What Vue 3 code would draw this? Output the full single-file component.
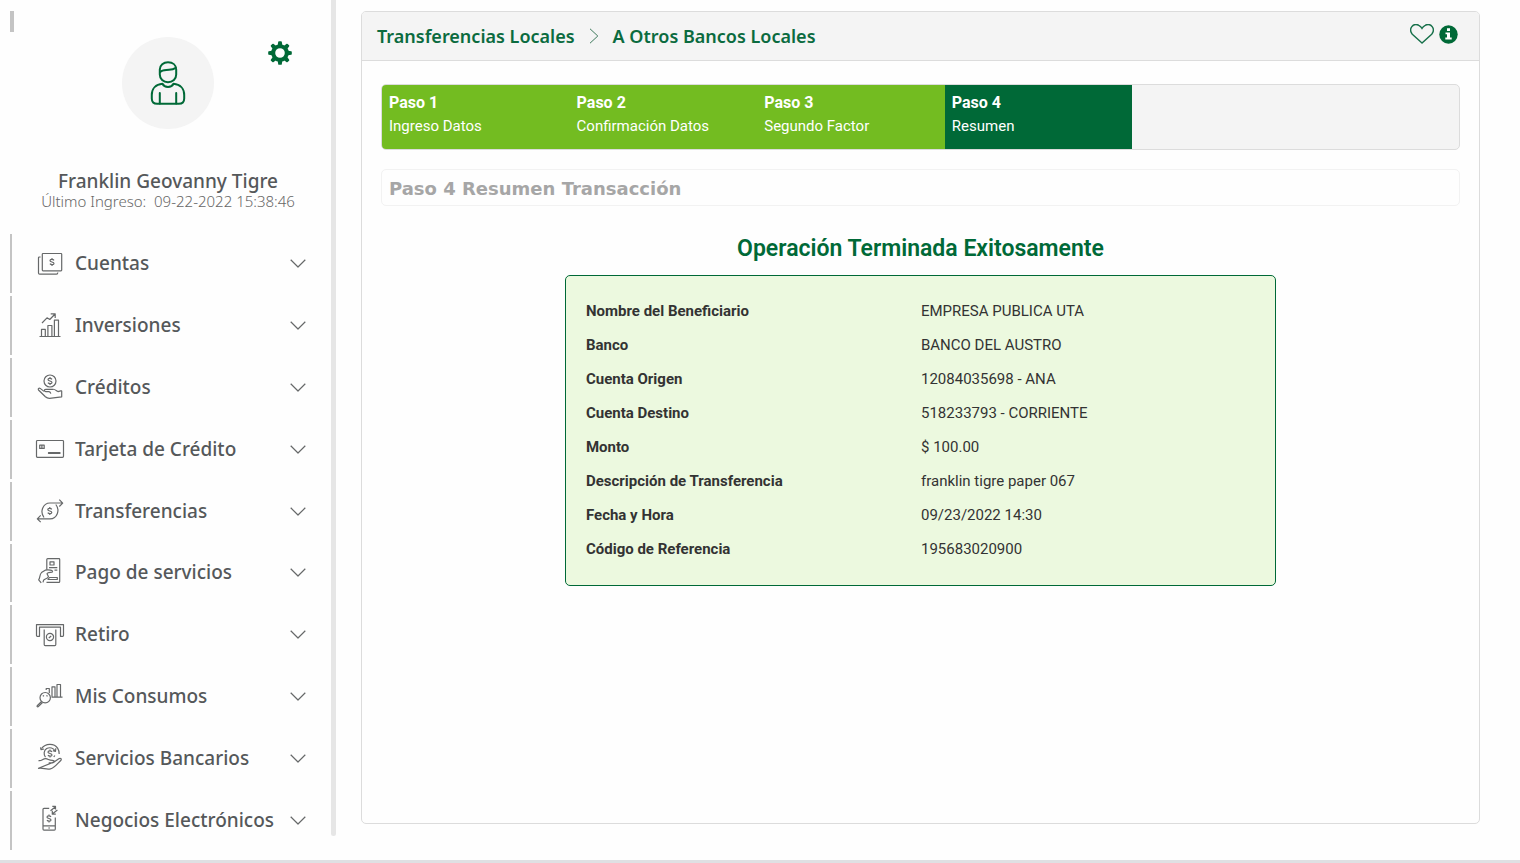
<script setup>
const menu = [
  { id: 'cuentas', label: 'Cuentas' },
  { id: 'inversiones', label: 'Inversiones' },
  { id: 'creditos', label: 'Créditos' },
  { id: 'tarjeta', label: 'Tarjeta de Crédito' },
  { id: 'transferencias', label: 'Transferencias' },
  { id: 'pago', label: 'Pago de servicios' },
  { id: 'retiro', label: 'Retiro' },
  { id: 'consumos', label: 'Mis Consumos' },
  { id: 'servicios', label: 'Servicios Bancarios' },
  { id: 'negocios', label: 'Negocios Electrónicos' },
]

// Stroke outlines on a 28 x 29 grid
const dollar = (x, y) =>
  `M${x + 2} ${y - 1.6}C${x + 1} ${y - 3} ${x - 2} ${y - 2.8} ${x - 2} ${y - 1.3}C${x - 2} ${y + 0.3} ${x + 2} ${y - 0.3} ${x + 2} ${y + 1.4}C${x + 2} ${y + 3} ${x - 1.2} ${y + 3} ${x - 2} ${y + 1.6}M${x} ${y - 4}V${y - 2.5}M${x} ${y + 2.6}V${y + 4}`

const icons = {
  cuentas: ['M7 4.5H25Q25.7 4.5 25.7 5.2V21Q25.7 21.8 25 21.8H7Q6.3 21.8 6.3 21V5.2Q6.3 4.5 7 4.5Z', 'M4.6 8H3.4Q2.5 8 2.5 9V24Q2.5 25.2 3.6 25.2H20.5Q21.8 25.2 21.8 23.5'],
  inversiones: ['M3.5 25.5H24.5M5.5 25.5V18.3H9.3V25.5M11.9 25.5V14.5H15.9V25.5M18.4 25.5V9.2H22.5V25.5', 'M6 12L11 6.8L13.8 8.5L19 3M14.7 2.8H19.2V7'],
  creditos: ['M20 8A6 6 0 1 1 8 8A6 6 0 1 1 20 8Z', 'M25.7 17.7L22 18.6C19.5 17 18.5 15.8 16.5 16.3H9.8C7.7 16.4 8.2 18.4 9.8 18.6H13C14.2 18.7 14.6 19.6 14.8 20.6', 'M8 18.4L4.2 15.4C3 14.6 1.7 15.7 2.5 17L9.4 23.7C10.6 24.8 11.8 25.4 13.6 25.3C18 24.8 21.2 24.4 25.7 23.8V17.7'],
  tarjeta: ['M1.5 5.5H26.5Q27.5 5.5 27.5 6.3V21.3Q27.5 22.3 26.5 22.3H1.5Q.5 22.3 .5 21.3V6.3Q.5 5.5 1.5 5.5Z', 'M3.7 10.2H8.2V13.4H3.7ZM5.9 10.2V13.4', 'M12.5 17.7H24V18.3H12.5Z'],
  transferencias: ['M8 20.5C3.7 15 6.7 6 14 6H26.5M23.3 2.7L26.7 6.1L23.3 9.5M19.8 7.5C24.2 13 21.3 21.8 14 21.8H1.5M4.7 18.4L1.3 21.8L4.7 25.2'],
  pago: ['M10.8 11.8V1.6Q10.8 .7 11.7 .7H23Q23.7 .7 23.7 1.5V23.5Q23.7 24.4 22.8 24.4H10.5', 'M14 3.8H18V7H14ZM13 9.6H21.3M18.5 12.2H21.3M13.5 19.5H21.3V21.5H12Z', 'M5.2 24.8L2.7 21.8C4.2 20.4 3.4 16.4 5.5 14.6L9.2 12.2C12.5 11.4 17.2 12.4 16.5 13.8C15.6 15 12 13.7 11 15.8L12.4 18.6C11.8 20.7 9 20.6 7.6 22.2L7 24.4'],
  retiro: ['M3.5 16.3H1.3Q.5 16.3 .5 15.5V4.6H27.5V15.5Q27.5 16.3 26.7 16.3H24.5V7.2H3.5Z', 'M8.2 9.6V24.5Q8.2 25.6 9.2 25.6H18.8Q19.8 25.6 19.8 24.5V9.6', 'M17.6 17A3.6 3.6 0 1 1 10.4 17A3.6 3.6 0 1 1 17.6 17Z', 'M15.2 16L12.8 18'],
  consumos: ['M14.4 15.7A5.2 5.2 0 1 1 4 15.7A5.2 5.2 0 1 1 14.4 15.7Z', 'M5.5 19.5L1.2 23.7Q.6 25.1 2.3 24.7L6.5 20.5', 'M10.2 8V6.5H13.3V11M16 14.5V4.8H19V14.5M21 14.5V2.5H24.5V14.5M15.5 15.2H26.5', 'M6.8 14.2L8 13.4M10.4 13.4L11.6 14.2'],
  servicios: ['M9.5 13.2C7.3 10.4 7.8 6.4 10.7 4.6C13.8 2.8 17.6 4 19.1 7M18.8 11.5L17.8 13', 'M5.5 4.7C9.6-.8 18-.9 21.6 4.1Q23.3 6.8 23.2 10', 'M4.5 3.4L5 5.6L8 5M19.8 4.2L19.5 7.3L16.9 6.6', 'M2.5 16.6C5.8 17.4 6.7 14.5 9.8 14.7C12.2 15 13.3 16.4 16.5 16.3C19 16.3 18.5 18.8 16.4 18.9H12.7M18.8 17.6L22.8 14.7C24.2 13.8 25.8 14.6 25 16.2C21.5 19.4 18.8 23.8 14.5 24.8C10 25.9 7.2 23.4 2.5 24.3Z'],
  negocios: ['M13.2 2.3H8Q7 2.3 7 3.2V23Q7 24.2 8 24.2H18.3Q19.3 24.2 19.3 23V11.5M7 19.8H19.3M12.3 22H14', 'M14.5 4.8L19.2 1M16.3 .4H19.5V3.6M21.4 4L16.6 7.8M16.3 4.8V8.2H19.8'],
}
icons.cuentas.push(dollar(16, 13))
icons.creditos.push(dollar(14, 8))
icons.transferencias.push(dollar(13.8, 14))
icons.servicios.push(dollar(14, 9.5))
icons.negocios.push(dollar(13, 12.5))

const steps = [
  { title: 'Paso 1', text: 'Ingreso Datos' },
  { title: 'Paso 2', text: 'Confirmación Datos' },
  { title: 'Paso 3', text: 'Segundo Factor' },
  { title: 'Paso 4', text: 'Resumen', current: true },
]

const details = [
  ['Nombre del Beneficiario', 'EMPRESA PUBLICA UTA'],
  ['Banco', 'BANCO DEL AUSTRO'],
  ['Cuenta Origen', '12084035698 - ANA'],
  ['Cuenta Destino', '518233793 - CORRIENTE'],
  ['Monto', '$ 100.00'],
  ['Descripción de Transferencia', 'franklin tigre paper 067'],
  ['Fecha y Hora', '09/23/2022 14:30'],
  ['Código de Referencia', '195683020900'],
]

const teeth = [0, 45, 90, 135, 180, 225, 270, 315]
</script>

<template>
  <div class="page">
    <div class="layout">
      <aside class="sidebar">
        <section class="profile">
          <div class="avatar">
            <svg width="36" height="44" viewBox="0 0 36 44" fill="none" stroke="#006937" stroke-width="2" stroke-linecap="round" stroke-linejoin="round">
              <path d="M9.8 8.5C9.8 4 13.5 1.2 18 1.2C22.7 1.2 26.2 4 26.2 8.5V13.5C26.2 18 22.8 21.3 18 21.3C13.3 21.3 9.8 18 9.8 13.5Z" />
              <path d="M10 11.2C12.5 8.3 15.5 9.2 19 8.7C22 8.5 24.5 7.6 25.8 6.8" />
              <path d="M12.5 22.8C5.5 23.4 1.8 28 1.8 34V37.5C1.8 40.8 3.8 42.8 7.2 42.8H28.8C32.2 42.8 34.2 40.8 34.2 37.5V34C34.2 28 30.5 23.4 23.5 22.8C21.5 27 14.5 27 12.5 22.8Z" />
              <path d="M9.8 32V42.5M26.2 32V42.5" />
            </svg>
          </div>
          <button class="gear" type="button" aria-label="Configuración">
            <svg width="24" height="24" viewBox="-12 -12 24 24">
              <g fill="#006937">
                <path v-for="a in teeth" :key="a" :transform="`rotate(${a})`" d="M-2.3-8L-1.8-11.2Q-1.6-11.8-1-11.8H1Q1.6-11.8 1.8-11.2L2.3-8Z" />
              </g>
              <circle r="6.8" fill="none" stroke="#006937" stroke-width="4" />
            </svg>
          </button>
          <p class="name">Franklin Geovanny Tigre</p>
          <p class="last">Último Ingreso:&nbsp; 09-22-2022 15:38:46</p>
        </section>
        <nav class="menu">
          <button v-for="item in menu" :key="item.id" type="button" class="item">
            <svg class="icon" width="28" height="29" viewBox="0 0 28 29">
              <path v-for="(d, i) in icons[item.id]" :key="i" :d="d" />
            </svg>
            <span>{{ item.label }}</span>
            <svg class="chevron" width="16" height="9" viewBox="0 0 16 9"><path d="M.7 .8L8 8L15.3 .8" /></svg>
          </button>
        </nav>
      </aside>
      <div class="divider"></div>

      <main class="panel">
        <header class="head">
          <a href="#">Transferencias Locales</a>
          <svg width="10" height="16" viewBox="0 0 10 16" fill="none" stroke="#3f7a5d"><path d="M1 .8L8.8 8L1 15.2" /></svg>
          <a href="#">A Otros Bancos Locales</a>
          <div class="actions">
            <button type="button" aria-label="Favorito">
              <svg width="24" height="20" viewBox="0 0 24 20" fill="none" stroke="#17704a" stroke-width="1.4"><path d="M12 19L2.3 10.2C-2 5 3.2-1.7 8.8 1.3Q11 2.4 12 4.3Q13 2.4 15.2 1.3C20.8-1.7 26 5 21.7 10.2Z" /></svg>
            </button>
            <button type="button" aria-label="Información">
              <svg width="19" height="19" viewBox="0 0 19 19"><circle cx="9.5" cy="9.5" r="9.2" fill="#006937" /><path fill="#fff" d="M8 3.2H11V6H8ZM6.5 7.5H11V12.6H12.7V14.4H6.3V12.6H8V9.3H6.5Z" /></svg>
            </button>
          </div>
        </header>
        <div class="body">
          <ol class="steps">
            <li v-for="s in steps" :key="s.title" :class="{ current: s.current }">
              <strong>{{ s.title }}</strong>
              <span>{{ s.text }}</span>
            </li>
          </ol>
          <h2 class="stage">Paso 4 Resumen Transacción</h2>
          <h1 class="result">Operación Terminada Exitosamente</h1>
          <div class="receipt">
            <table>
              <tbody>
                <tr v-for="[k, v] in details" :key="k">
                  <th scope="row">{{ k }}</th>
                  <td>{{ v }}</td>
                </tr>
              </tbody>
            </table>
          </div>
        </div>
      </main>
    </div>
    <footer class="strip"></footer>
  </div>
</template>

<style>
body {
  margin: 0;
  background: #fefefe;
}
</style>

<style scoped>
.page {
  min-height: 100vh;
  display: flex;
  flex-direction: column;
  font-family: Roboto, sans-serif;
  color: #333;
}
.page button {
  border: 0;
  padding: 0;
  background: none;
  color: inherit;
  cursor: pointer;
}
svg {
  display: block;
  flex: none;
}
.layout {
  flex: 1;
  display: flex;
}
.sidebar {
  position: relative;
  flex: 0 0 331px;
  display: flex;
  flex-direction: column;
  padding-bottom: 10px;
  box-sizing: border-box;
  font-family: "Noto Sans", sans-serif;
}
.sidebar::before {
  content: "";
  position: absolute;
  left: 10px;
  top: 11px;
  width: 4px;
  height: 21px;
  background: #c4c4c4;
}
.profile {
  display: grid;
  grid-template-columns: 1fr 92px 1fr;
  padding: 37px 0 25px 5px;
}
.avatar {
  grid-column: 2;
  height: 92px;
  border-radius: 50%;
  background: #f4f4f4;
  display: flex;
  align-items: center;
  justify-content: center;
}
.gear {
  grid-column: 3;
  justify-self: start;
  align-self: start;
  margin: 4px 0 0 54px;
}
.name,
.last {
  grid-column: 1 / -1;
  margin: 0;
  text-align: center;
  white-space: nowrap;
}
.name {
  margin-top: 39px;
  font-size: 19px;
  line-height: 26px;
  font-weight: 500;
  color: #55585a;
}
.last {
  font-size: 15px;
  line-height: 15px;
  font-weight: 300;
  color: #666;
}
.menu {
  flex: 1;
  display: flex;
  flex-direction: column;
  gap: 3px;
  padding-left: 10px;
}
.menu .item {
  flex: 1;
  display: flex;
  align-items: center;
  min-height: 48px;
  padding: 0 25px 0 24px;
  border-left: 2px solid #c4c4c4;
  font-family: inherit;
  font-size: 19px;
  font-weight: 500;
  color: #55585a;
  text-align: left;
}
.item span {
  flex: 1;
  padding: 0 0 1px 11px;
  white-space: nowrap;
}
.icon,
.chevron {
  fill: none;
  stroke: #666869;
  stroke-width: 1.2;
  stroke-linejoin: round;
  overflow: visible;
}
.divider {
  flex: 0 0 5px;
  margin-bottom: 24px;
  border-radius: 0 0 3px 3px;
  background: #e6e6e6;
}
.panel {
  flex: 1;
  min-width: 0;
  margin: 11px 40px 36px 25px;
  border: 1px solid #dcdcdc;
  border-radius: 5px;
}
.head {
  display: flex;
  align-items: center;
  height: 48px;
  padding: 0 21px 0 15px;
  gap: 14px;
  background: #f4f4f4;
  border-bottom: 1px solid #dcdcdc;
  border-radius: 4px 4px 0 0;
  font-family: "Noto Sans", sans-serif;
  font-size: 18px;
  font-weight: 600;
}
.head a {
  color: #0b6b3f;
  text-decoration: none;
  white-space: nowrap;
}
.actions {
  display: flex;
  align-items: center;
  gap: 5px;
  margin-left: auto;
  padding-bottom: 4px;
}
.body {
  padding: 23px 19px;
}
.steps {
  display: flex;
  height: 64px;
  margin: 0;
  padding: 0;
  list-style: none;
  overflow: hidden;
  background: #f4f4f4;
  border: 1px solid #dcdcdc;
  border-radius: 5px;
}
.steps li {
  flex: 0 0 17.42%;
  box-sizing: border-box;
  padding: 6px 7px;
  background: #73bc21;
  color: #fff;
}
.steps li.current {
  background: #006937;
}
.steps strong,
.steps span {
  display: block;
}
.steps strong {
  font-size: 16px;
  line-height: 24px;
}
.steps span {
  font-size: 15px;
  line-height: 22px;
}
.stage {
  margin: 19px 0 0;
  padding: 2px 7px 0;
  border: 1px solid #f2f2f2;
  border-radius: 5px;
  font-family: "DejaVu Sans", sans-serif;
  font-size: 18px;
  line-height: 33px;
  font-weight: 700;
  color: #a6a6a6;
}
.result {
  margin: 29px 0 12px;
  font-size: 23px;
  line-height: 28px;
  font-weight: 600;
  text-align: center;
  color: #006937;
}
.receipt {
  box-sizing: border-box;
  width: 65.9%;
  margin: 0 auto;
  padding: 18px 19px 19px 20px;
  background: #ecf9df;
  border: 1px solid #006937;
  border-radius: 5px;
}
.receipt table {
  width: 100%;
  table-layout: fixed;
  border-collapse: collapse;
  font-size: 15px;
  line-height: 34px;
}
.receipt th,
.receipt td {
  padding: 0;
  text-align: left;
}
.strip {
  height: 3px;
  background: #dfe0e3;
}
</style>
